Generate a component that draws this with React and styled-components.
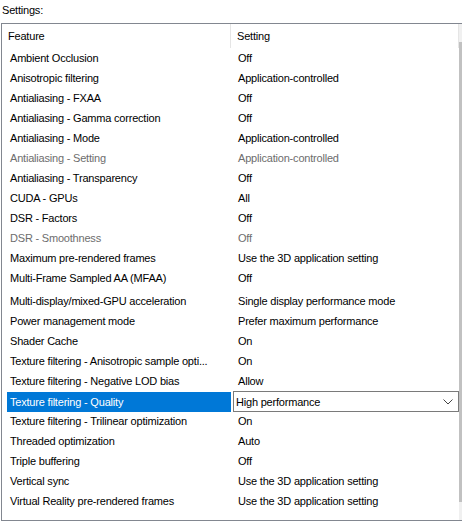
import React from 'react'
import styled, { createGlobalStyle } from 'styled-components'

const rows = [
    ['Ambient Occlusion', 'Off'],
    ['Anisotropic filtering', 'Application-controlled'],
    ['Antialiasing - FXAA', 'Off'],
    ['Antialiasing - Gamma correction', 'Off'],
    ['Antialiasing - Mode', 'Application-controlled'],
    ['Antialiasing - Setting', 'Application-controlled', 'disabled'],
    ['Antialiasing - Transparency', 'Off'],
    ['CUDA - GPUs', 'All'],
    ['DSR - Factors', 'Off'],
    ['DSR - Smoothness', 'Off', 'disabled'],
    ['Maximum pre-rendered frames', 'Use the 3D application setting'],
    ['Multi-Frame Sampled AA (MFAA)', 'Off'],
    ['Multi-display/mixed-GPU acceleration', 'Single display performance mode', 'tall'],
    ['Power management mode', 'Prefer maximum performance'],
    ['Shader Cache', 'On'],
    ['Texture filtering - Anisotropic sample opti...', 'On'],
    ['Texture filtering - Negative LOD bias', 'Allow'],
    ['Texture filtering - Quality', 'High performance', 'selected'],
    ['Texture filtering - Trilinear optimization', 'On'],
    ['Threaded optimization', 'Auto'],
    ['Triple buffering', 'Off'],
    ['Vertical sync', 'Use the 3D application setting'],
    ['Virtual Reality pre-rendered frames', 'Use the 3D application setting'],
]

const App = () => {
    return (
      <>
        <GlobalStyle />
        <Page>
            <Label>Settings:</Label>
            <Frame>
                <Table>
                    <Header>
                        <HeadCell>Feature</HeadCell>
                        <HeadCell>Setting</HeadCell>
                    </Header>
                    {rows.map(([feature, value, state]) => (
                        <Row key={feature} tall={state === 'tall'}>
                            <Feature selected={state === 'selected'} disabled={state === 'disabled'}>
                                {feature}
                            </Feature>
                            {state === 'selected' ? (
                                <Select>
                                    <span>{value}</span>
                                    <svg width="10" height="6" viewBox="0 0 10 6">
                                        <path d="M0.5 0.5 L5 5 L9.5 0.5" fill="none" stroke="#444" strokeWidth="1" />
                                    </svg>
                                </Select>
                            ) : (
                                <Value disabled={state === 'disabled'}>{value}</Value>
                            )}
                        </Row>
                    ))}
                </Table>
                <Scrollbar>
                    <Arrow />
                    <Thumb />
                    <Arrow />
                </Scrollbar>
            </Frame>
        </Page>
      </>
    )
}

export default App

const GlobalStyle = createGlobalStyle`
    html, body {
        margin: 0;
        padding: 0;
        background: #ffffff;
        overflow: hidden;
    }
    body {
        font-family: "Liberation Sans", Arial, sans-serif;
        font-size: 11px;
        letter-spacing: -0.2px;
        color: #000000;
    }
`

const Page = styled.div`
    width: 462px;
    height: 522px;
    display: flex;
    flex-direction: column;
`

const Label = styled.div`
    height: 23px;
    line-height: 21px;
    padding-left: 2px;
`

const Frame = styled.div`
    margin-left: 1px;
    width: 476px;
    height: 496px;
    border: 1px solid #828790;
    display: flex;
`

const Table = styled.div`
    width: 457px;
    display: flex;
    flex-direction: column;
`

const Header = styled.div`
    display: grid;
    grid-template-columns: 229px 1fr;
    height: 24px;
`

const HeadCell = styled.div`
    display: flex;
    align-items: center;
    padding-left: 6px;
    border-right: 1px solid #e5e5e5;
`

const Row = styled.div`
    display: grid;
    grid-template-columns: 229px 1fr;
    height: 20px;
    margin-top: ${({tall}) => tall ? '3px' : '0'};
    align-items: center;
`

const Feature = styled.div`
    height: 20px;
    line-height: 20px;
    margin-left: 5px;
    padding-left: 3px;
    white-space: nowrap;
    overflow: hidden;
    background: ${({selected}) => selected ? '#0078d7' : 'transparent'};
    color: ${({selected, disabled}) => selected ? '#ffffff' : disabled ? '#6d6d6d' : '#000000'};
`

const Value = styled.div`
    padding-left: 7px;
    white-space: nowrap;
    color: ${({disabled}) => disabled ? '#6d6d6d' : '#000000'};
`

const Select = styled.div`
    height: 19px;
    margin-left: 2px;
    border: 1px solid #7a7a7a;
    display: flex;
    align-items: center;
    justify-content: space-between;
    padding: 0 5px 0 2px;
    svg {
        display: block;
    }
`

const Scrollbar = styled.div`
    width: 17px;
    display: flex;
    flex-direction: column;
    background: #f0f0f0;
`

const Arrow = styled.div`
    height: 17px;
`

const Thumb = styled.div`
    flex: 1;
    margin: 1px 0;
    background: #c1c1c1;
`
